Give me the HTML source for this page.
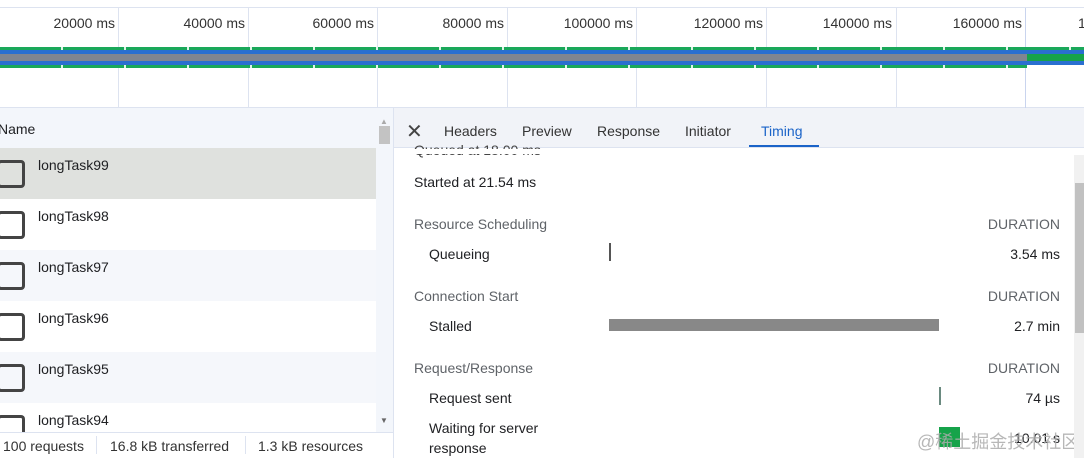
<!DOCTYPE html><html><head><style>
*{margin:0;padding:0;box-sizing:border-box}
body{width:1084px;height:458px;overflow:hidden;background:#fff;font-family:"Liberation Sans","Noto Sans CJK SC",sans-serif;font-size:14px;color:#202124;position:relative}
.a{position:absolute;white-space:nowrap}
.vl{position:absolute;top:8px;height:100px;width:1px;background:#dde3f0}
.lbl{position:absolute;top:15px;font-size:14px;color:#333;text-align:right;width:110px}
.row{position:absolute;left:0;width:376px;height:51px}
.cb{position:absolute;left:-3px;width:28px;height:28px;border:3px solid #444;border-radius:4px}
.nm{position:absolute;left:38px;top:9px}
.g{color:#5f6368}
</style></head><body>
<div class="a" style="left:0;top:7px;width:1084px;height:1px;background:#dde3f0"></div>
<div class="a" style="left:0;top:107px;width:1084px;height:1px;background:#dde3f0"></div>
<div class="vl" style="left:118px"></div><div class="vl" style="left:248px"></div><div class="vl" style="left:377px"></div><div class="vl" style="left:507px"></div><div class="vl" style="left:636px"></div><div class="vl" style="left:766px"></div><div class="vl" style="left:896px"></div><div class="vl" style="left:1025px;background:#c9d4ee"></div>
<div class="lbl" style="left:5px">20000 ms</div><div class="lbl" style="left:135px">40000 ms</div><div class="lbl" style="left:264px">60000 ms</div><div class="lbl" style="left:394px">80000 ms</div><div class="lbl" style="left:523px">100000 ms</div><div class="lbl" style="left:653px">120000 ms</div><div class="lbl" style="left:782px">140000 ms</div><div class="lbl" style="left:912px">160000 ms</div>
<div class="a" style="left:1078px;top:15px;color:#333">1</div>
<div class="a" style="left:0;top:47px;width:1084px;height:3px;background:repeating-linear-gradient(90deg,#1aa85a 0 61px,#e0f5e8 61px 63px)"></div>
<div class="a" style="left:0;top:50px;width:1084px;height:15px;background:#2a6fd0"></div>
<div class="a" style="left:0;top:54px;width:1027px;height:7px;background:#808590"></div>
<div class="a" style="left:1027px;top:54px;width:57px;height:7px;background:#16a34a"></div>
<div class="a" style="left:0;top:65px;width:1027px;height:3px;background:repeating-linear-gradient(90deg,#1aa85a 0 61px,#e0f5e8 61px 63px)"></div>

<div class="a" style="left:0;top:108px;width:393px;height:40px;background:#f3f6fb"></div>
<div class="a" style="left:-2px;top:121px">Name</div>
<div class="row" style="top:148px;background:#dfe1de"><div class="cb" style="top:12px"></div><div class="nm">longTask99</div></div>
<div class="row" style="top:199px;background:#fff"><div class="cb" style="top:12px"></div><div class="nm">longTask98</div></div>
<div class="row" style="top:250px;background:#f5f7fb"><div class="cb" style="top:12px"></div><div class="nm">longTask97</div></div>
<div class="row" style="top:301px;background:#fff"><div class="cb" style="top:12px"></div><div class="nm">longTask96</div></div>
<div class="row" style="top:352px;background:#f5f7fb"><div class="cb" style="top:12px"></div><div class="nm">longTask95</div></div>
<div class="row" style="top:403px;background:#fff;height:29px"><div class="cb" style="top:12px;height:20px;border-bottom:none;border-radius:4px 4px 0 0"></div><div class="nm">longTask94</div></div>
<div class="a" style="left:376px;top:116px;width:17px;height:316px;background:#f3f6fb"></div>
<div class="a" style="left:379px;top:126px;width:11px;height:18px;background:#c3c3c3"></div>
<div class="a" style="left:380px;top:117px;color:#aaa;font-size:8px">▲</div>
<div class="a" style="left:380px;top:416px;color:#666;font-size:8px">▼</div>
<div class="a" style="left:0;top:432px;width:393px;height:26px;background:#fff;border-top:1px solid #dde3f0"></div>
<div class="a" style="left:3px;top:438px;color:#333">100 requests</div>
<div class="a" style="left:96px;top:436px;width:1px;height:18px;background:#dde3f0"></div>
<div class="a" style="left:110px;top:438px;color:#333">16.8 kB transferred</div>
<div class="a" style="left:245px;top:436px;width:1px;height:18px;background:#dde3f0"></div>
<div class="a" style="left:258px;top:438px;color:#333">1.3 kB resources</div>

<div class="a" style="left:393px;top:108px;width:1px;height:350px;background:#dde3f0"></div>
<div class="a" style="left:394px;top:108px;width:690px;height:40px;background:#f1f3f8;border-bottom:1px solid #dde3f0"></div>
<div class="a" style="left:406px;top:119px;font-size:20px;color:#444">✕</div>
<div class="a" style="left:444px;top:123px;color:#333">Headers</div>
<div class="a" style="left:522px;top:123px;color:#333">Preview</div>
<div class="a" style="left:597px;top:123px;color:#333">Response</div>
<div class="a" style="left:685px;top:123px;color:#333">Initiator</div>
<div class="a" style="left:761px;top:123px;color:#1a63c8">Timing</div>
<div class="a" style="left:749px;top:145px;width:70px;height:2px;background:#1a63c8"></div>
<div class="a" style="left:414px;top:142px;color:#444">Queued at 18.00 ms</div>
<div class="a" style="left:394px;top:149px;width:690px;height:5px;background:#fff"></div>
<div class="a" style="left:414px;top:174px">Started at 21.54 ms</div>
<div class="a g" style="left:414px;top:216px">Resource Scheduling</div><div class="a g" style="right:24px;top:216px">DURATION</div>
<div class="a" style="left:429px;top:246px">Queueing</div><div class="a" style="left:609px;top:243px;width:2px;height:18px;background:#555"></div><div class="a" style="right:24px;top:246px">3.54 ms</div>
<div class="a g" style="left:414px;top:288px">Connection Start</div><div class="a g" style="right:24px;top:288px">DURATION</div>
<div class="a" style="left:429px;top:318px">Stalled</div><div class="a" style="left:609px;top:319px;width:330px;height:12px;background:#888"></div><div class="a" style="right:24px;top:318px">2.7 min</div>
<div class="a g" style="left:414px;top:360px">Request/Response</div><div class="a g" style="right:24px;top:360px">DURATION</div>
<div class="a" style="left:429px;top:390px">Request sent</div><div class="a" style="left:939px;top:387px;width:2px;height:18px;background:#6a8a80"></div><div class="a" style="right:24px;top:390px">74 µs</div>
<div class="a" style="left:429px;top:418px;line-height:20px">Waiting for server<br>response</div>
<div class="a" style="left:939px;top:427px;width:21px;height:20px;background:#16a34a"></div>
<div class="a" style="right:24px;top:430px">10.01 s</div>
<div class="a" style="left:917px;top:428px;font-size:18px;color:rgba(170,170,170,.85)">@稀土掘金技术社区</div>
<div class="a" style="left:1074px;top:155px;width:10px;height:303px;background:#f1f1f1"></div>
<div class="a" style="left:1075px;top:183px;width:9px;height:150px;background:#c1c1c1"></div>
</body></html>
